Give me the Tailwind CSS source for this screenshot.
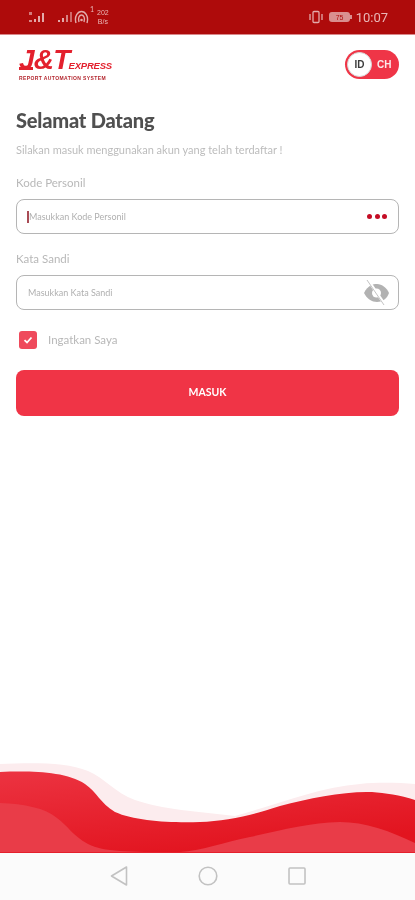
<!DOCTYPE html>
<html lang="en">

<head>
    <meta charset="UTF-8">
    <title>J&amp;T Express Login</title>
    <script src="https://cdn.jsdelivr.net/npm/@tailwindcss/browser@4"></script>
</head>

<body class="bg-white">
    <div class="w-[415px] h-[900px] flex flex-col overflow-hidden bg-white font-['Lato','Noto_Sans',sans-serif] blur-[0.5px]">

        <!-- Status bar -->
        <div class="h-[35px] shrink-0 bg-[#ae0b0b] border-b border-[#d9888a] flex items-center justify-between pl-[28px] pr-[27px] text-[#e9b7b7]">
            <div class="flex items-center">
                <svg class="w-[20px] h-[14px]" viewBox="0 0 20 14" fill="#e3aaaa">
                    <rect x="1" y="2" width="3" height="3" opacity=".7"/>
                    <rect x="1" y="10" width="3" height="2" opacity=".8"/>
                    <rect x="6" y="9" width="2" height="3"/>
                    <rect x="10" y="6" width="2" height="6"/>
                    <rect x="14" y="3" width="2" height="9"/>
                </svg>
                <svg class="w-[16px] h-[14px] ml-[9px]" viewBox="0 0 16 14" fill="#e3aaaa">
                    <rect x="1" y="10" width="2" height="2"/>
                    <rect x="5" y="8" width="2" height="4"/>
                    <rect x="9" y="5" width="2" height="7" opacity=".75"/>
                    <rect x="13" y="2" width="2" height="10" opacity=".6"/>
                </svg>
                <svg class="w-[15px] h-[15px] ml-[1px]" viewBox="0 0 15 15" fill="none" stroke="#e3aaaa" stroke-width="1.4">
                    <path d="M2 13 C0 6 4 1.5 7.5 1.5 C11 1.5 15 6 13 13"/>
                    <path d="M5 12 C3.500 8 5.500 5 7.500 5 C9.500 5 11.500 8 10 12"/>
                    <circle cx="7.500" cy="10" r="1.300" fill="#e3aaaa" stroke="none"/>
                </svg>
                <span class="text-[7px] leading-none self-start ml-[1px] mt-[-2px]">1</span>
                <div class="ml-[3px] flex flex-col items-center text-[7px] leading-[9px] font-['Liberation_Sans',sans-serif]">
                    <span>202</span>
                    <span>B/s</span>
                </div>
            </div>
            <div class="flex items-center">
                <svg class="w-[14px] h-[14px]" viewBox="0 0 14 14" fill="none" stroke="#e3aaaa" stroke-width="1.300">
                    <rect x="4" y="1.500" width="6" height="11" rx="1"/>
                    <path d="M1 4 V10 M13 4 V10"/>
                </svg>
                <div class="ml-[6px] w-[21px] h-[10px] rounded-[3px] bg-[#d98f8f] flex items-center justify-center text-[7px] leading-none text-[#ae0b0b] font-['Liberation_Sans',sans-serif]">75</div>
                <div class="w-[1.500px] h-[4px] bg-[#d98f8f]"></div>
                <span class="ml-[4px] text-[13px] leading-none font-['Roboto',sans-serif]">10:07</span>
            </div>
        </div>

        <!-- Login form -->
        <div class="flex-1 px-[16px] min-h-0">
            <div class="flex items-start justify-between pt-[15px] h-[63px]">
                <div class="ml-[3px] w-[94px] flex flex-col text-[#e3202d] font-['Liberation_Sans',sans-serif] italic font-bold">
                    <div class="relative flex items-end h-[20px]">
                        <span class="text-[28px] leading-[20px] font-black tracking-[-0.8px]">J&amp;T</span>
                        <span class="text-[9.500px] leading-[9px] ml-[-1px] tracking-[-0.2px]">EXPRESS</span>
                        <div class="absolute left-0 bottom-0 w-[14px] h-[3px] bg-[#e3202d]"></div>
                    </div>
                    <span class="mt-[5px] text-[5px] leading-[6px] not-italic whitespace-nowrap tracking-[0.4px] text-[#b3262e]">REPORT AUTOMATION SYSTEM</span>
                </div>
                <div class="w-[54px] h-[29px] rounded-full bg-[#ef3547] p-[2px] flex items-center">
                    <div class="w-[25px] h-[25px] rounded-full bg-white border border-[#d8d8d8] flex items-center justify-center text-[10px] font-bold text-[#3c3c3c] font-['Liberation_Sans',sans-serif]">ID</div>
                    <span class="ml-[5px] text-[10px] font-bold text-[#fde8ea] font-['Liberation_Sans',sans-serif]">CH</span>
                </div>
            </div>

            <h1 class="mt-[9px] text-[20px] leading-[26px] font-black tracking-[-0.2px] text-[#505050]">Selamat Datang</h1>
            <p class="mt-[10px] text-[11px] leading-[14px] text-[#bcbcbc] whitespace-nowrap">Silakan masuk menggunakan akun yang telah terdaftar !</p>

            <label class="block mt-[19px] text-[11.500px] leading-[14px] text-[#b8b8b8]">Kode Personil</label>
            <div class="mt-[9px] h-[35px] rounded-[8px] border border-[#b5b5b5] flex items-center justify-between pl-[10px] pr-[11px]">
                <div class="flex items-center">
                    <div class="w-[2px] h-[12px] bg-[#a94b55]"></div>
                    <span class="text-[9px] text-[#b0b0b0]">Masukkan Kode Personil</span>
                </div>
                <div class="flex gap-[2.500px]">
                    <div class="w-[5px] h-[5px] rounded-full bg-[#c40d25]"></div>
                    <div class="w-[5px] h-[5px] rounded-full bg-[#c40d25]"></div>
                    <div class="w-[5px] h-[5px] rounded-full bg-[#c40d25]"></div>
                </div>
            </div>

            <label class="block mt-[18px] text-[11.500px] leading-[14px] text-[#b8b8b8]">Kata Sandi</label>
            <div class="mt-[9px] h-[35px] rounded-[8px] border border-[#b5b5b5] flex items-center justify-between pl-[11px] pr-[8px]">
                <span class="text-[9px] text-[#b0b0b0]">Masukkan Kata Sandi</span>
                <svg class="w-[27px] h-[27px]" viewBox="0 0 27 27" fill="none">
                    <path d="M1 14 C5 6 10 5 14 5 C19 5 24 9 26 14 C24 20 19 23 14 23 C9 23 4 20 1 14 Z" fill="#b2b2b2"/>
                    <circle cx="13.500" cy="14" r="4.500" fill="#ffffff"/>
                    <path d="M5 1 L22 26" stroke="#ffffff" stroke-width="3"/>
                    <path d="M4 1 L21 26" stroke="#c4c4c4" stroke-width="1"/>
                </svg>
            </div>

            <div class="mt-[21px] ml-[3px] flex items-center">
                <div class="w-[18px] h-[18px] rounded-[3px] bg-[#ef4a5c] flex items-center justify-center">
                    <svg class="w-[10px] h-[10px]" viewBox="0 0 10 10" fill="none" stroke="#ffffff" stroke-width="1.800">
                        <path d="M1.500 5.200 L4 7.500 L8.500 2.500"/>
                    </svg>
                </div>
                <span class="ml-[11px] text-[11.500px] leading-[14px] text-[#b8b8b8]">Ingatkan Saya</span>
            </div>

            <button class="mt-[21px] w-full h-[46px] rounded-[8px] bg-[#f03446] text-white text-[10.500px] font-bold">MASUK</button>
        </div>

        <!-- Wave footer -->
        <svg class="block w-[415px] h-[90px] shrink-0" viewBox="0 0 415 90">
            <defs>
                <linearGradient id="waveRed" x1="0" y1="0" x2="0.5" y2="1">
                    <stop offset="0" stop-color="#ec3341"/>
                    <stop offset="1" stop-color="#e2141f"/>
                </linearGradient>
            </defs>
            <path d="M0 1 C25 0 65 -2 88 8 C105 15 115 30 135 37 C160 46 200 49 235 53 C275 42 320 24 360 21 C380 19 400 20 415 21 V90 H0 Z" fill="#fcecee"/>
            <path d="M0 9 C30 8 65 8 85 21 C97 29 100 40 115 49 C135 58 170 60 200 59 C225 58 250 53 280 43 C310 35 345 28 372 29 C385 30 400 32 415 37 V90 H0 Z" fill="url(#waveRed)"/>
            <path d="M0 40 C25 41 45 45 57 55 C68 63 72 72 88 81 C105 89 125 89 180 89 C200 88 225 79 250 74 C285 66 310 60 340 59 C365 59 390 68 415 80 V90 H0 Z" fill="#e93c48"/>
            <rect x="0" y="89" width="415" height="1" fill="#e5202c"/>
        </svg>

        <!-- Navigation bar -->
        <div class="h-[47px] shrink-0 bg-[#fbfbfb] flex items-center justify-center gap-[70px] pb-[1px]">
            <svg class="w-[18px] h-[22px]" viewBox="0 0 18 22" fill="none" stroke="#c2c2c2" stroke-width="1.600">
                <path d="M16.500 2 V20 L1.500 11 Z" stroke-linejoin="round"/>
            </svg>
            <svg class="w-[20px] h-[20px]" viewBox="0 0 20 20" fill="none" stroke="#c2c2c2" stroke-width="1.600">
                <circle cx="10" cy="10" r="8.800"/>
            </svg>
            <svg class="w-[18px] h-[18px]" viewBox="0 0 18 18" fill="none" stroke="#c2c2c2" stroke-width="1.600">
                <rect x="1" y="1" width="16" height="16" rx="1"/>
            </svg>
        </div>
    </div>
</body>

</html>
